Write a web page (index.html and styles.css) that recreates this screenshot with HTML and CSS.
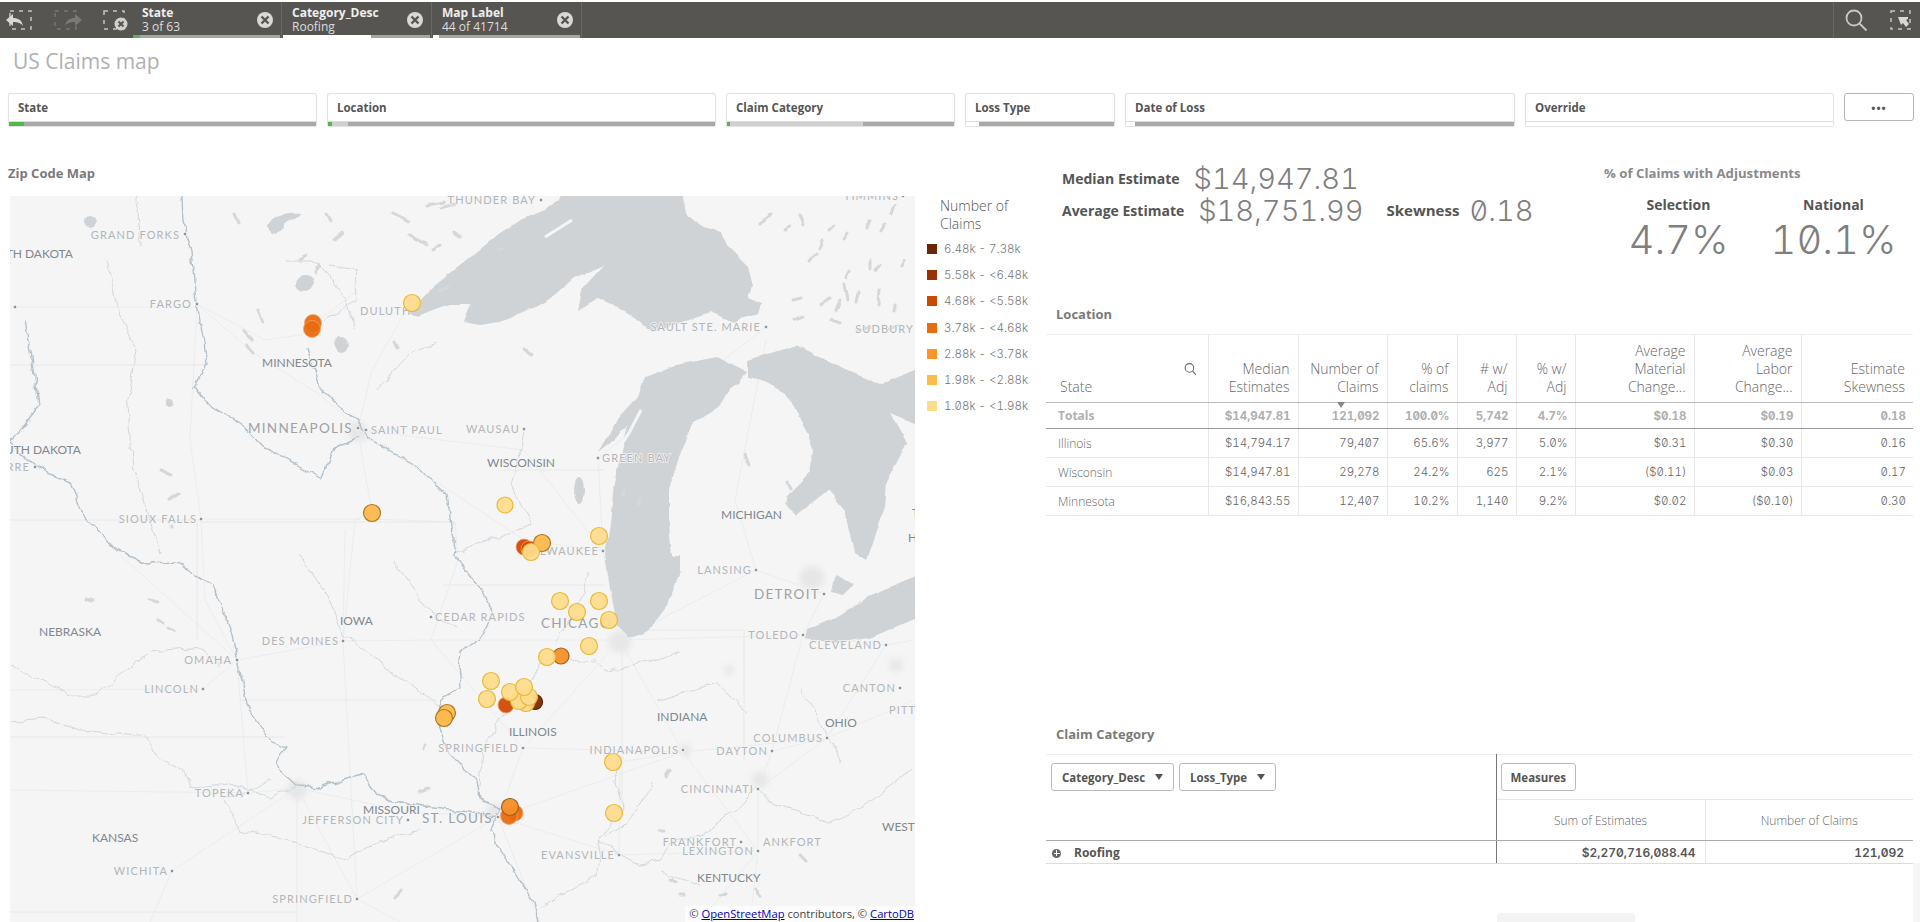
FILE: index.html
```html
<!DOCTYPE html>
<html lang="en">
<head>
  <meta charset="UTF-8">
  <title>US Claims map</title>
  <link rel="stylesheet" href="styles.css">
</head>
<body>

  <!-- Barre des selections -->
  <header class="toolbar">
    <div class="tool-icons">
      <svg class="tool-icon" width="30" height="22" viewBox="0 0 30 22"><rect class="dash" x="5" y="2" width="21" height="18"/><path class="arrow" d="M1 11l7-6v4c5 0 9 2 10 8-2-3-5-4-10-4v4z"/></svg>
      <svg class="tool-icon" width="30" height="22" viewBox="0 0 30 22"><rect class="dash dim" x="2" y="2" width="21" height="18"/><path class="arrow dim" d="M29 11l-7-6v4c-5 0-9 2-10 8 2-3 5-4 10-4v4z"/></svg>
      <svg class="tool-icon" width="30" height="22" viewBox="0 0 30 22"><rect class="dash" x="3" y="2" width="20" height="18"/><circle class="close-bg" cx="20" cy="15" r="6.5"/><path class="close-x" d="M17.5 12.5l5 5m0-5l-5 5"/></svg>
    </div>
    <div class="sel-item">
      <div class="sel-text"><b>State</b><span>3 of 63</span></div>
      <svg class="sel-close" width="18" height="18" viewBox="0 0 18 18"><circle cx="9" cy="9" r="8"/><path d="M5.5 5.5l7 7m0-7l-7 7"/></svg>
      <div class="sel-bar"><i class="seg-green" style="width:5%"></i></div>
    </div>
    <div class="sel-item">
      <div class="sel-text"><b>Category_Desc</b><span>Roofing</span></div>
      <svg class="sel-close" width="18" height="18" viewBox="0 0 18 18"><circle cx="9" cy="9" r="8"/><path d="M5.5 5.5l7 7m0-7l-7 7"/></svg>
      <div class="sel-bar"><i class="seg-white" style="width:60%"></i></div>
    </div>
    <div class="sel-item">
      <div class="sel-text"><b>Map Label</b><span>44 of 41714</span></div>
      <svg class="sel-close" width="18" height="18" viewBox="0 0 18 18"><circle cx="9" cy="9" r="8"/><path d="M5.5 5.5l7 7m0-7l-7 7"/></svg>
      <div class="sel-bar"><i class="seg-white" style="width:4%"></i></div>
    </div>
    <div class="tool-right">
      <svg width="24" height="24" viewBox="0 0 24 24"><circle class="search-ring" cx="10" cy="10" r="7.5"/><path class="search-ring" d="M15.5 15.5l7 7"/></svg>
      <svg width="22" height="22" viewBox="0 0 22 22"><rect class="dash" x="1" y="2" width="19" height="18"/><path class="arrow" d="M8 8h10v2l-2 1 3 4-3 3-3-4-2 2z"/></svg>
    </div>
  </header>

  <h1 class="page-title">US Claims map</h1>

  <!-- Filtres -->
  <div class="filters">
    <div class="filter"><span class="filter-name">State</span><div class="filter-bar"><i class="seg-green" style="width:15px"></i></div></div>
    <div class="filter"><span class="filter-name">Location</span><div class="filter-bar"><i class="seg-green" style="width:4px"></i><i class="seg-light" style="width:16px"></i></div></div>
    <div class="filter"><span class="filter-name">Claim Category</span><div class="filter-bar"><i class="seg-green" style="width:3px"></i><i class="seg-light" style="width:133px"></i></div></div>
    <div class="filter"><span class="filter-name">Loss Type</span><div class="filter-bar"><i class="seg-white" style="width:13px"></i></div></div>
    <div class="filter"><span class="filter-name">Date of Loss</span><div class="filter-bar"><i class="seg-white" style="width:9px"></i></div></div>
    <div class="filter"><span class="filter-name">Override</span><div class="filter-bar empty"></div></div>
    <button class="more-btn">•••</button>
  </div>

  <main class="content">
    <!-- Carte -->
    <section class="map-panel">
      <h2 class="panel-title">Zip Code Map</h2>
      <div class="map-row">
        <div class="map-box">
          <svg class="map" width="905" height="726" viewBox="10 196 905 726">
            <defs>
              <filter id="wiggle" filterUnits="userSpaceOnUse" x="-10" y="170" width="950" height="780" color-interpolation-filters="sRGB">
                <feTurbulence type="fractalNoise" baseFrequency="0.06" numOctaves="3" seed="4"/>
                <feDisplacementMap in="SourceGraphic" scale="9" xChannelSelector="R" yChannelSelector="G"/>
                <feGaussianBlur stdDeviation="0.3"/>
              </filter>
              <filter id="coast" filterUnits="userSpaceOnUse" x="-10" y="170" width="950" height="780" color-interpolation-filters="sRGB">
                <feTurbulence type="fractalNoise" baseFrequency="0.05" numOctaves="3" seed="9"/>
                <feDisplacementMap in="SourceGraphic" scale="5" xChannelSelector="R" yChannelSelector="G"/>
                <feGaussianBlur stdDeviation="0.5"/>
              </filter>
              <filter id="haze" filterUnits="userSpaceOnUse" x="-10" y="170" width="950" height="780">
                <feGaussianBlur stdDeviation="3"/>
              </filter>
            </defs>
            <rect x="10" y="196" width="905" height="726" fill="#f5f5f5"/>

            <!-- villes -->
            <g class="urban" filter="url(#haze)">
              <circle cx="358" cy="432" r="10"/><circle cx="297" cy="790" r="10"/><circle cx="620" cy="642" r="11"/>
              <circle cx="495" cy="812" r="9"/><circle cx="685" cy="750" r="6"/><circle cx="812" cy="578" r="12"/>
              <circle cx="760" cy="780" r="8"/><circle cx="729" cy="670" r="5"/><circle cx="896" cy="665" r="7"/>
            </g>

            <!-- routes et frontieres -->
            <path class="roads" d="M10 307H197M197 304L265 340 300 335 358 290M197 304L250 350 320 395 358 428M358 428L372 370 405 312M358 432L372 513 355 520 343 641 357 899M200 519H372L455 522M197 304L190 440 201 519 205 600 237 660 248 793M10 690L203 689 237 660 343 641 431 640 560 640 620 640 803 635 886 645 914 640M10 790L248 793 297 788 408 812 498 817 683 752 827 738 914 700M620 640L523 748 498 817 540 922M620 640L683 752 758 851 700 922M824 594L803 635 772 751 758 789 758 851 750 922M358 430L524 540 603 551 620 640M358 430L524 450 603 551M603 551L598 458 766 327M297 788L172 871 150 922M297 788L357 899 400 922M498 817L357 899M498 817L619 855 758 851M619 855L620 762 683 752M827 738L772 751M827 738L886 645M827 738L758 789M824 594L756 570 620 640M756 570L735 500 766 340M523 748L683 752M523 748L431 640M431 640L458 560 455 522M237 660L120 555M343 641L345 530"/>
            <path class="borders" d="M10 365H205M10 520H200M200 522H455M10 737H285M240 700H437M10 912H297M297 785V922M622 640V800M744 630V760M622 630H744M443 585H605M605 470H500M197 522V640"/>

            <!-- rivieres -->
            <g class="rivers" filter="url(#wiggle)">
              <path class="main" d="M182 195L183 223 192 250 197 303 203 337 207 363 195 387 207 403 240 423 263 447 323 480 333 450 358 438"/>
              <path class="main" d="M308 347L320 387 358 423 370 440 417 467 447 493 455 557 477 585 493 612 483 635 460 652 458 668 460 688 443 698 437 715 447 752 477 782 480 798 500 808 490 828 500 848 533 902 540 922"/>
              <path class="main" d="M25 320L33 370 38 407 10 443 37 467 70 483 80 510 117 550 147 563 177 562 213 585 230 628 240 668 247 705 267 738 285 748 275 765 297 785 320 787 363 773 377 795 410 805 467 812 497 817"/>
              <path d="M300 555L327 595 343 635 400 678 440 705"/>
              <path d="M10 665L70 695 97 695 150 652 203 648 220 668"/>
              <path d="M10 722L40 718 80 730 147 737 157 758 180 768 193 788 227 783 270 797 297 785"/>
              <path d="M593 662L543 658 533 678 503 715 483 748 480 788"/>
              <path d="M524 430L521 450 510 483 531 523 500 537 455 553"/>
              <path d="M540 908L597 875 600 842 633 815 653 782M600 842L640 865 660 862 670 842 700 835 743 802 757 788 773 805 833 822 870 802 913 768"/>
              <path d="M590 658L607 670 647 662 680 652M620 762L615 782 622 808 600 842M657 702L717 683 747 712"/>
              <path d="M377 390L410 353 437 343M355 330L345 300 320 262 285 262M325 320L358 300 356 270 330 265"/>
              <path d="M107 260L117 307 137 350 127 407 133 467 147 510 160 555M393 562L430 612 458 630M270 780L225 800 240 830 290 840 345 860 380 840 420 830M555 640L575 610 590 575M700 885L660 870M140 245L135 190M800 690L820 720 840 760"/>
            </g>

            <!-- lacs -->
            <g class="lakes" filter="url(#coast)">
              <path d="M408 313L433 287 467 260 500 233 521 220 545 210 559 200 565 185H681L686 213 703 227 721 232 728 247 748 267 753 287 748 297 762 303 759 313 741 318 734 323 710 313 683 322 652 332 638 320 610 303 598 298 578 310 583 287 603 265 574 278 545 303 500 322 480 325 463 322 470 305 450 305 417 317Z"/>
              <path d="M747 372L717 357 676 365 645 377 638 397 617 420 598 453 614 440 628 425 614 483 610 523 605 555 610 588 617 625 630 638 647 632 667 605 680 572 680 555 672 557 669 523 669 490 679 457 693 423 714 410 721 403 731 387 738 383Z"/>
              <path d="M748 360L797 345 830 362 880 385 930 363V430L890 413 907 443 886 483 884 507 866 560 855 553 845 510 828 490 797 515 785 505 786 497 810 473 814 450 800 417 786 393 762 380 748 377Z"/>
              <path d="M930 570L870 595 837 617 807 628 805 638 833 643 870 638 930 612Z"/>
              <path d="M837 575L853 585 843 595 830 592 832 582Z"/>
              <ellipse cx="579" cy="490" rx="5" ry="13"/>
              <ellipse cx="341" cy="345" rx="7" ry="8"/>
              <path d="M267 226C270 214 290 212 301 213 296 222 285 220 284 226 284 234 268 238 267 226Z"/>
              <ellipse cx="305" cy="284" rx="9" ry="8"/>
              <ellipse cx="90" cy="222" rx="6" ry="6"/>
              <ellipse cx="170" cy="403" rx="4" ry="4"/>
            </g>
            <path class="island" d="M545 237L572 220M641 410L629 433 612 459"/>
            <path class="lakelets" filter="url(#coast)" d="M258 310l5 12M243 330l10 10M248 345l6 8M335 240l8-7M300 260l6-4M318 265l-3 8M326 215l4 6M425 205l20-3M392 213l18 8M410 235l16 10M440 208l16-4M454 232l6 5M432 250l8-5M150 600l8 2M158 620l6 3M162 470l10 4M170 500l8-6M172 525l0 2M85 600l6 2M168 628l6 3M770 215l-10 10M790 225l-5 6M800 215l4 9M822 240l-3 8M830 230l5-5M848 233l-4 6M870 220l-3 8M885 225l-4 7M895 205l-3 9M870 260l0 8M880 265l-4 5M850 270l-3 8M820 305l10-6M840 300l-4 10M845 285l3 14M858 292l-2 10M879 290l-1 14M895 305l-2 6M793 300l8-2M795 320l8-3M832 320l8 3M858 330l14-3M890 330l8-4M500 250l4-2M525 350l6 5M625 490l-1 5M745 455l4 10M787 482l3 6M640 500l-1 4M420 792l8-3M425 745l-1 4M400 890l-5 8M670 770l-4 6M660 830l4 0M670 880l6 2M680 895l5 0M720 895l6-2M755 890l5 6M800 855l6 6M235 215l4 8M810 260l6-7M905 260l-3 7M440 290l8-4M395 342l3 6M90 600l3 1"/>

            <!-- etiquettes -->
            <g class="city">
              <text x="536" y="204" text-anchor="end">THUNDER BAY</text>
              <text x="180" y="239" text-anchor="end">GRAND FORKS</text>
              <text x="192" y="308" text-anchor="end">FARGO</text>
              <text x="360" y="315">DULUTH</text>
              <text x="371" y="434">SAINT PAUL</text>
              <text x="520" y="433" text-anchor="end">WAUSAU</text>
              <text x="30" y="471" text-anchor="end">PIERRE</text>
              <text x="197" y="523" text-anchor="end">SIOUX FALLS</text>
              <text x="761" y="331" text-anchor="end">SAULT STE. MARIE</text>
              <text x="914" y="333" text-anchor="end">SUDBURY</text>
              <text x="899" y="200" text-anchor="end">TIMMINS</text>
              <text x="602" y="462">GREEN BAY</text>
              <text x="599" y="555" text-anchor="end">MILWAUKEE</text>
              <text x="339" y="645" text-anchor="end">DES MOINES</text>
              <text x="435" y="621">CEDAR RAPIDS</text>
              <text x="232" y="664" text-anchor="end">OMAHA</text>
              <text x="199" y="693" text-anchor="end">LINCOLN</text>
              <text x="244" y="797" text-anchor="end">TOPEKA</text>
              <text x="404" y="824" text-anchor="end">JEFFERSON CITY</text>
              <text x="168" y="875" text-anchor="end">WICHITA</text>
              <text x="353" y="903" text-anchor="end">SPRINGFIELD</text>
              <text x="519" y="752" text-anchor="end">SPRINGFIELD</text>
              <text x="752" y="574" text-anchor="end">LANSING</text>
              <text x="799" y="639" text-anchor="end">TOLEDO</text>
              <text x="882" y="649" text-anchor="end">CLEVELAND</text>
              <text x="896" y="692" text-anchor="end">CANTON</text>
              <text x="889" y="714">PITTSBURGH</text>
              <text x="823" y="742" text-anchor="end">COLUMBUS</text>
              <text x="679" y="754" text-anchor="end">INDIANAPOLIS</text>
              <text x="768" y="755" text-anchor="end">DAYTON</text>
              <text x="754" y="793" text-anchor="end">CINCINNATI</text>
              <text x="737" y="846" text-anchor="end">FRANKFORT</text>
              <text x="763" y="846">ANKFORT</text>
              <text x="754" y="855" text-anchor="end">LEXINGTON</text>
              <text x="615" y="859" text-anchor="end">EVANSVILLE</text>
            </g>
            <g class="city big">
              <text x="353" y="433" text-anchor="end">MINNEAPOLIS</text>
              <text x="493" y="823" text-anchor="end">ST. LOUIS</text>
              <text x="820" y="599" text-anchor="end">DETROIT</text>
              <text x="541" y="628">CHICAGO</text>
            </g>
            <g class="state">
              <text x="73" y="258" text-anchor="end">NORTH DAKOTA</text>
              <text x="262" y="367">MINNESOTA</text>
              <text x="81" y="454" text-anchor="end">SOUTH DAKOTA</text>
              <text x="487" y="467">WISCONSIN</text>
              <text x="721" y="519">MICHIGAN</text>
              <text x="912" y="517">TORONTO</text>
              <text x="908" y="542">HAMILTON</text>
              <text x="39" y="636">NEBRASKA</text>
              <text x="340" y="625">IOWA</text>
              <text x="363" y="814">MISSOURI</text>
              <text x="92" y="842">KANSAS</text>
              <text x="657" y="721">INDIANA</text>
              <text x="825" y="727">OHIO</text>
              <text x="509" y="736">ILLINOIS</text>
              <text x="882" y="831">WEST VIRGINIA</text>
              <text x="697" y="882">KENTUCKY</text>
            </g>
            <g class="dots">
              <circle cx="541" cy="200" r="2"/><circle cx="185" cy="234" r="2"/><circle cx="197" cy="304" r="2"/>
              <circle cx="15" cy="307" r="2"/><circle cx="358" cy="428" r="2"/><circle cx="366" cy="430" r="2"/>
              <circle cx="524" cy="429" r="2"/><circle cx="35" cy="467" r="2"/><circle cx="201" cy="519" r="2"/>
              <circle cx="766" cy="327" r="2"/><circle cx="903" cy="196" r="2"/><circle cx="598" cy="458" r="2"/>
              <circle cx="603" cy="551" r="2"/><circle cx="343" cy="641" r="2"/><circle cx="431" cy="617" r="2"/>
              <circle cx="237" cy="660" r="2"/><circle cx="203" cy="689" r="2"/><circle cx="248" cy="793" r="2"/>
              <circle cx="408" cy="820" r="2"/><circle cx="498" cy="817" r="2"/><circle cx="172" cy="871" r="2"/>
              <circle cx="357" cy="899" r="2"/><circle cx="523" cy="748" r="2"/><circle cx="756" cy="570" r="2"/>
              <circle cx="824" cy="594" r="2"/><circle cx="803" cy="635" r="2"/><circle cx="886" cy="645" r="2"/>
              <circle cx="900" cy="688" r="2"/><circle cx="827" cy="738" r="2"/><circle cx="683" cy="750" r="2"/>
              <circle cx="772" cy="751" r="2"/><circle cx="758" cy="789" r="2"/><circle cx="741" cy="842" r="2"/>
              <circle cx="758" cy="851" r="2"/><circle cx="619" cy="855" r="2"/>
            </g>

            <!-- points -->
            <g class="pins">
              <circle class="c4 soft" cx="313" cy="323" r="8.5"/><circle class="c4 soft" cx="312" cy="329" r="8.5"/>
              <circle class="c7" cx="412" cy="303" r="8.5"/>
              <circle class="c6" cx="372" cy="513" r="8.5"/>
              <circle class="c7" cx="505" cy="505" r="8"/>
              <circle class="c7" cx="599" cy="536" r="8.5"/>
              <circle class="c3 soft" cx="524" cy="547" r="8"/><circle class="c3 soft" cx="529" cy="549" r="8"/>
              <circle class="c6" cx="542" cy="543" r="8.5"/><circle class="c7" cx="531" cy="552" r="8.5"/>
              <circle class="c7" cx="560" cy="601" r="8.5"/><circle class="c7" cx="599" cy="601" r="8.5"/>
              <circle class="c7" cx="577" cy="612" r="8.5"/><circle class="c7" cx="609" cy="620" r="8.5"/>
              <circle class="c7" cx="589" cy="646" r="8.5"/>
              <circle class="c5" cx="561" cy="656" r="8"/><circle class="c7" cx="547" cy="657" r="8.5"/>
              <circle class="c7" cx="491" cy="681" r="8.5"/><circle class="c7" cx="487" cy="699" r="8.5"/>
              <circle class="c1" cx="535" cy="702" r="7.5"/><circle class="c3 soft" cx="506" cy="705" r="8"/>
              <circle class="c7" cx="526" cy="703" r="8.5"/><circle class="c7" cx="519" cy="701" r="8.5"/>
              <circle class="c7" cx="510" cy="692" r="8.5"/><circle class="c7" cx="529" cy="697" r="8.5"/>
              <circle class="c7" cx="524" cy="687" r="8.5"/>
              <circle class="c6" cx="447" cy="713" r="8.5"/><circle class="c6" cx="444" cy="718" r="8.5"/>
              <circle class="c4 soft" cx="515" cy="813" r="8"/><circle class="c4 soft" cx="509" cy="816" r="8.5"/>
              <circle class="c5" cx="510" cy="807" r="8.5"/>
              <circle class="c7" cx="613" cy="762" r="8.5"/><circle class="c7" cx="614" cy="813" r="8.5"/>
            </g>
          </svg>
          <div class="attribution">© <a href="#">OpenStreetMap</a> contributors, © <a href="#">CartoDB</a></div>
        </div>

        <div class="legend">
          <div class="legend-title">Number of Claims</div>
          <ul class="legend-list">
            <li><i class="sw1"></i>6.48k - 7.38k</li>
            <li><i class="sw2"></i>5.58k - &lt;6.48k</li>
            <li><i class="sw3"></i>4.68k - &lt;5.58k</li>
            <li><i class="sw4"></i>3.78k - &lt;4.68k</li>
            <li><i class="sw5"></i>2.88k - &lt;3.78k</li>
            <li><i class="sw6"></i>1.98k - &lt;2.88k</li>
            <li><i class="sw7"></i>1.08k - &lt;1.98k</li>
          </ul>
        </div>
      </div>
    </section>

    <section class="right-panel">
      <!-- Indicateurs -->
      <div class="kpis">
        <div class="kpi-main">
          <div class="kpi-line"><span class="kpi-label">Median Estimate</span><span class="kpi-value">$14,947.81</span></div>
          <div class="kpi-line"><span class="kpi-label">Average Estimate</span><span class="kpi-value">$18,751.99</span><span class="kpi-label skew">Skewness</span><span class="kpi-value">0.18</span></div>
        </div>
        <div class="kpi-adj">
          <div class="adj-title">% of Claims with Adjustments</div>
          <div class="adj-cols">
            <div class="adj-col"><div class="adj-label">Selection</div><div class="adj-value">4.7%</div></div>
            <div class="adj-col"><div class="adj-label">National</div><div class="adj-value">10.1%</div></div>
          </div>
        </div>
      </div>

      <!-- Tableau Location -->
      <div class="location">
        <h2 class="panel-title table-title">Location</h2>
        <table class="data-table">
          <colgroup>
            <col class="w-state"><col class="w-med"><col class="w-num"><col class="w-pct"><col class="w-adj"><col class="w-adj"><col class="w-mat"><col class="w-lab"><col class="w-skew">
          </colgroup>
          <thead>
            <tr>
              <th class="left"><div class="state-head"><span>State</span><svg width="15" height="15" viewBox="0 0 14 14"><circle cx="6" cy="5.5" r="4" fill="none" stroke="#666"/><path d="M9 8.5l3 3.5" stroke="#666"/></svg></div></th>
              <th>Median<br>Estimates</th>
              <th class="sorted">Number of<br>Claims</th>
              <th>% of<br>claims</th>
              <th># w/<br>Adj</th>
              <th>% w/<br>Adj</th>
              <th>Average<br>Material<br>Change...</th>
              <th>Average<br>Labor<br>Change...</th>
              <th>Estimate<br>Skewness</th>
            </tr>
          </thead>
          <tbody>
            <tr class="totals"><td class="left">Totals</td><td>$14,947.81</td><td>121,092</td><td>100.0%</td><td>5,742</td><td>4.7%</td><td>$0.18</td><td>$0.19</td><td>0.18</td></tr>
            <tr><td class="left">Illinois</td><td>$14,794.17</td><td>79,407</td><td>65.6%</td><td>3,977</td><td>5.0%</td><td>$0.31</td><td>$0.30</td><td>0.16</td></tr>
            <tr><td class="left">Wisconsin</td><td>$14,947.81</td><td>29,278</td><td>24.2%</td><td>625</td><td>2.1%</td><td>($0.11)</td><td>$0.03</td><td>0.17</td></tr>
            <tr><td class="left">Minnesota</td><td>$16,843.55</td><td>12,407</td><td>10.2%</td><td>1,140</td><td>9.2%</td><td>$0.02</td><td>($0.10)</td><td>0.30</td></tr>
          </tbody>
        </table>
      </div>

      <!-- Tableau croise -->
      <div class="category">
        <h2 class="panel-title table-title">Claim Category</h2>
        <table class="pivot">
          <colgroup><col class="w-dim"><col class="w-sum"><col class="w-sum2"></colgroup>
          <tr class="pivot-top">
            <td rowspan="2" class="dim-cell">
              <div class="pill-row">
                <span class="pill">Category_Desc <em></em></span>
                <span class="pill">Loss_Type <em></em></span>
              </div>
            </td>
            <td colspan="2" class="measure-cell"><span class="pill">Measures</span></td>
          </tr>
          <tr class="pivot-head">
            <td class="head-sum">Sum of Estimates</td>
            <td>Number of Claims</td>
          </tr>
          <tr class="pivot-row">
            <td class="dim-cell"><span class="plus"></span>Roofing</td>
            <td class="val head-sum">$2,270,716,088.44</td>
            <td class="val">121,092</td>
          </tr>
        </table>
      </div>
    </section>
  </main>

  <div class="scroll-side"></div>
  <div class="scroll-bottom"></div>
</body>
</html>
```

FILE: styles.css
```css
/* Style general */
html, body {
  margin: 0;
  padding: 0;
  height: 922px;
  overflow: hidden;
  background: #fff;
  font-family: "Open Sans", "Noto Sans", sans-serif;
  color: #555;
}

h1, h2, ul {
  margin: 0;
  padding: 0;
}

/* Barre du haut */
.toolbar {
  display: flex;
  height: 36px;
  margin-top: 2px;
  background: #575551;
  color: #eee;
}

.tool-icons {
  display: flex;
  align-items: center;
  justify-content: space-between;
  width: 126px;
  padding: 0 2px 0 5px;
  box-sizing: content-box;
  flex: none;
}

.tool-icon {
  display: block;
}

.dash {
  fill: none;
  stroke: #c4c4c2;
  stroke-width: 1.5;
  stroke-dasharray: 4 5;
}

.dash.dim {
  stroke: #777;
}

.arrow {
  fill: #d8d8d6;
}

.arrow.dim {
  fill: #7a7976;
}

.close-bg {
  fill: #d0d0ce;
}

.close-x {
  stroke: #575551;
  stroke-width: 2;
}

.sel-item {
  position: relative;
  display: flex;
  align-items: center;
  justify-content: space-between;
  width: 149px;
  margin-right: 1px;
  padding: 0 7px 1px 9px;
  box-sizing: border-box;
  border-right: 1px solid #6a6865;
}

.sel-text {
  display: flex;
  flex-direction: column;
  font-size: 12px;
  line-height: 14px;
}

.sel-text b {
  font-weight: 700;
}

.sel-text span {
  color: #ddd;
}

.sel-close circle {
  fill: #d8d8d6;
}

.sel-close path {
  stroke: #575551;
  stroke-width: 2.4;
}

.sel-bar {
  position: absolute;
  left: 0;
  right: 1px;
  bottom: 0;
  height: 3px;
  background: #a5a5a3;
}

.sel-bar i {
  display: block;
  height: 100%;
}

.tool-right {
  display: flex;
  align-items: center;
  gap: 22px;
  margin-left: auto;
  width: 87px;
  padding-left: 10px;
  box-sizing: border-box;
  border-left: 1px solid #6a6865;
}

.search-ring {
  fill: none;
  stroke: #c8c8c6;
  stroke-width: 1.8;
}

/* Titre de la page */
.page-title {
  height: 55px;
  padding: 9px 0 0 13px;
  box-sizing: border-box;
  font-size: 21px;
  line-height: 28px;
  font-weight: 400;
  color: #b0b0b0;
}

/* Filtres */
.filters {
  display: grid;
  grid-template-columns: 309px 389px 229px 150px 390px 309px 70px;
  column-gap: 10px;
  padding-left: 8px;
  height: 34px;
}

.filter {
  display: flex;
  flex-direction: column;
  height: 34px;
  box-sizing: border-box;
  border: 1px solid #e2e2e2;
  border-radius: 3px;
  box-shadow: 0 0 1px rgba(0, 0, 0, 0.1);
  background: #fff;
}

.filter-name {
  flex: 1;
  padding-left: 9px;
  font-size: 11.5px;
  line-height: 27px;
  font-weight: 700;
  color: #555;
}

.filter-bar {
  display: flex;
  flex: none;
  height: 4px;
  background: #a9a9a9;
  border-top: 1px solid #ddd;
}

.filter-bar.empty {
  background: #fff;
}

.filter-bar i {
  display: block;
  height: 100%;
}

.seg-green {
  background: #52b848;
}

.seg-light {
  background: #cfcfcf;
}

.seg-white {
  background: #fff;
}

.more-btn {
  height: 28px;
  border: 1px solid #b5b5b5;
  border-radius: 3px;
  background: #fff;
  color: #555;
  font-size: 11px;
  font-weight: 700;
  letter-spacing: 1px;
  font-family: inherit;
}

/* Contenu */
.content {
  display: grid;
  grid-template-columns: 1046px 874px;
  margin-top: 33px;
  height: 762px;
}

.panel-title {
  font-size: 13px;
  line-height: 26px;
  font-weight: 700;
  color: #7a7a7a;
}

.map-panel {
  padding-left: 8px;
  box-sizing: border-box;
}

.map-row {
  display: flex;
  gap: 12px;
  margin-top: 10px;
}

.map-box {
  position: relative;
  flex: none;
  width: 905px;
  height: 726px;
  margin-left: 2px;
}

.map {
  display: block;
}

.urban circle {
  fill: #e6e6e6;
}

.roads {
  fill: none;
  stroke: #e9eaeb;
  stroke-width: 0.8;
}

.borders {
  fill: none;
  stroke: #ebe6e6;
  stroke-width: 1;
}

.rivers path {
  fill: none;
  stroke: #ccd4da;
  stroke-width: 0.9;
  stroke-linejoin: round;
}

.rivers path.main {
  stroke: #b4c1ca;
  stroke-width: 1.4;
}

.lakes {
  fill: #d0d3d6;
}

.island {
  fill: none;
  stroke: #f5f5f5;
  stroke-width: 3;
}

.lakelets {
  fill: none;
  stroke: #d5d8da;
  stroke-width: 3;
  stroke-linecap: round;
}

.city text {
  font-family: Lato, sans-serif;
  font-size: 11px;
  letter-spacing: 1.1px;
  fill: #b2b6ba;
  paint-order: stroke;
  stroke: #f5f5f5;
  stroke-width: 1.5px;
}

.city.big text {
  font-size: 13.5px;
  letter-spacing: 1.3px;
  fill: #9ba1a7;
}

.state text {
  font-family: Lato, sans-serif;
  font-size: 12px;
  fill: #808890;
  paint-order: stroke;
  stroke: #f5f5f5;
  stroke-width: 1.5px;
}

.dots circle {
  fill: #8d949a;
  stroke: #fff;
  stroke-width: 1;
}

.pins circle {
  stroke-width: 1.2;
  fill-opacity: 0.95;
}

.c1 { fill: #7a2c06; stroke: #5d2005; }
.c3 { fill: #d24a05; stroke: #a33904; }
.c4 { fill: #e96c11; stroke: #b9560e; }
.c5 { fill: #f68f28; stroke: #a0601c; }
.c6 { fill: #fdb84c; stroke: #a97a25; }
.c7 { fill: #fddc8c; stroke: #e8b93a; }
.pins circle.soft { stroke: #f3a468; stroke-width: 0.8; }

.attribution {
  position: absolute;
  right: 0;
  bottom: 0;
  padding: 0 1px 0 4px;
  background: rgba(255, 255, 255, 0.7);
  font-size: 11.2px;
  line-height: 16px;
  color: #444;
}

.attribution a {
  color: #0000b8;
}

/* Legende */
.legend {
  width: 110px;
  font-size: 12px;
}

.legend-title {
  width: 80px;
  margin-left: 13px;
  font-size: 14px;
  line-height: 18px;
  font-weight: 300;
  color: #555;
  margin-top: 1px;
}

.legend-list {
  list-style: none;
  margin-top: 3px;
}

.legend-list li {
  display: flex;
  align-items: center;
  gap: 7px;
  height: 26.2px;
  font-size: 11.5px;
  color: #777;
  white-space: nowrap;
  font-family: Inter, sans-serif;
  font-feature-settings: "tnum", "zero";
  font-weight: 300;
}

.legend-list i {
  width: 10px;
  height: 10px;
  flex: none;
}

.sw1 { background: #6b2507; }
.sw2 { background: #963206; }
.sw3 { background: #c94a04; }
.sw4 { background: #e96c11; }
.sw5 { background: #fb9429; }
.sw6 { background: #fdbb4a; }
.sw7 { background: #fddc8c; }

/* Indicateurs */
.right-panel {
  display: flex;
  flex-direction: column;
}

.kpis {
  display: flex;
  height: 140px;
}

.kpi-main {
  width: 558px;
  padding: 2px 0 0 16px;
  box-sizing: border-box;
}

.kpi-line {
  display: flex;
  align-items: center;
  height: 32px;
}

.kpi-label {
  font-size: 14px;
  font-weight: 700;
  color: #555;
  white-space: nowrap;
}

.kpi-label.skew {
  margin: 0 10px 0 23px;
  font-size: 15px;
}

.kpi-value {
  margin-left: 14px;
  font-family: Inter, sans-serif;
  font-feature-settings: "tnum", "zero";
  font-size: 29px;
  font-weight: 300;
  color: #7f7f7f;
  white-space: nowrap;
}

.kpi-label.skew + .kpi-value {
  margin-left: 0;
}

.adj-title {
  font-size: 13.2px;
  line-height: 26px;
  font-weight: 700;
  color: #8a8a8a;
}

.adj-cols {
  display: flex;
  margin-left: -3px;
  margin-top: 8px;
}

.adj-col {
  width: 155px;
  text-align: center;
}

.adj-label {
  font-size: 14px;
  line-height: 22px;
  font-weight: 700;
  color: #555;
}

.adj-value {
  font-family: Inter, sans-serif;
  font-feature-settings: "tnum", "zero";
  font-size: 40px;
  line-height: 48px;
  font-weight: 300;
  color: #7f7f7f;
  white-space: nowrap;
}

/* Tableaux */
.location {
  height: 420px;
}

.table-title {
  padding-left: 10px;
  line-height: 28px;
  margin-bottom: 6px;
}

.data-table,
.pivot {
  width: 867px;
  border-collapse: collapse;
  table-layout: fixed;
}

.w-state { width: 162px; }
.w-med { width: 90px; }
.w-num { width: 89px; }
.w-pct { width: 70px; }
.w-adj { width: 59px; }
.w-mat { width: 119px; }
.w-lab { width: 107px; }
.w-skew { width: 112px; }

.data-table th {
  height: 68px;
  padding: 0 8px 6px;
  box-sizing: border-box;
  vertical-align: bottom;
  text-align: right;
  font-size: 14px;
  line-height: 18px;
  font-weight: 300;
  color: #666;
  border-top: 1px solid #eee;
  border-left: 1px solid #e8e8e8;
  border-bottom: 1px solid #bbb;
  overflow: hidden;
  white-space: nowrap;
}

.data-table th:first-child,
.data-table td:first-child {
  border-left: none;
}

.data-table th.left,
.data-table td.left {
  text-align: left;
}

.data-table th.left {
  padding-left: 14px;
}

.data-table th.sorted {
  position: relative;
  overflow: visible;
}

.data-table th.sorted::after {
  content: "";
  position: absolute;
  left: 38px;
  bottom: -6px;
  border-left: 4px solid transparent;
  border-right: 4px solid transparent;
  border-top: 6px solid #888;
}

.state-head {
  display: flex;
  align-items: flex-end;
  justify-content: space-between;
  position: relative;
  padding-right: 2px;
}

.state-head svg {
  margin-bottom: 19px;
}

.data-table td {
  height: 29px;
  padding: 0 7px;
  box-sizing: border-box;
  text-align: right;
  font-family: Inter, sans-serif;
  font-feature-settings: "tnum", "zero";
  font-size: 11.5px;
  font-weight: 300;
  color: #666;
  border-left: 1px solid #e8e8e8;
  border-bottom: 1px solid #e8e8e8;
  white-space: nowrap;
}

.data-table td.left {
  padding-left: 12px;
  font-family: "Open Sans", sans-serif;
  font-size: 12px;
  font-weight: 300;
}

.data-table .totals td {
  height: 26px;
  font-weight: 700;
  color: #b0b0b0;
  border-bottom: 1px solid #999;
}

.data-table .totals td.left {
  font-weight: 700;
}

/* Tableau croise */
.category {
  height: 202px;
}

.w-dim { width: 450px; }
.w-sum { width: 209px; }
.w-sum2 { width: 208px; }

.pivot td {
  padding: 0;
  box-sizing: border-box;
}

.pivot-top td {
  height: 45px;
  vertical-align: top;
  border-top: 1px solid #eee;
}

.dim-cell {
  border-right: 1px solid #777;
}

.pill-row {
  display: flex;
  gap: 5px;
  padding: 8px 0 0 5px;
}

.pill {
  display: inline-flex;
  align-items: center;
  height: 28px;
  padding: 0 10px;
  box-sizing: border-box;
  border: 1px solid #bbb;
  border-radius: 3px;
  font-size: 11.5px;
  font-weight: 700;
  color: #555;
  white-space: nowrap;
}

.pill em {
  width: 0;
  height: 0;
  margin-left: 10px;
  border-left: 4px solid transparent;
  border-right: 4px solid transparent;
  border-top: 6px solid #555;
}

.measure-cell {
  padding: 8px 0 0 4px !important;
  border-bottom: 1px solid #e8e8e8;
}

.measure-cell .pill {
  padding: 0 9px;
}

.pivot-head td {
  height: 41px;
  text-align: center;
  font-size: 12px;
  font-weight: 300;
  color: #666;
  border-bottom: 1px solid #aaa;
}

.pivot-top .dim-cell {
  border-bottom: 1px solid #aaa;
}

.head-sum {
  border-right: 1px solid #e8e8e8;
}

.pivot-row td {
  height: 23px;
  border-bottom: 1px solid #ddd;
  font-size: 12px;
  font-weight: 700;
  color: #555;
}

.pivot-row .val {
  padding-right: 9px;
  text-align: right;
  font-family: Inter, sans-serif;
  font-feature-settings: "tnum", "zero";
  font-size: 12px;
  font-weight: 600;
}

.plus {
  display: inline-block;
  position: relative;
  width: 9px;
  height: 9px;
  margin: 0 13px 0 6px;
  border-radius: 50%;
  background: #666;
  vertical-align: -1px;
}

.plus::before {
  content: "";
  position: absolute;
  left: 1.5px;
  top: 4px;
  width: 6px;
  height: 1px;
  background: #fff;
}

.plus::after {
  content: "";
  position: absolute;
  left: 4px;
  top: 1.5px;
  width: 1px;
  height: 6px;
  background: #fff;
}

/* Ascenseurs pales */
.scroll-side {
  position: absolute;
  left: 1913px;
  top: 863px;
  width: 7px;
  height: 59px;
  background: #f6f6f6;
}

.scroll-bottom {
  position: absolute;
  left: 1497px;
  top: 913px;
  width: 138px;
  height: 9px;
  border-radius: 4px 4px 0 0;
  background: #f3f3f3;
}
```
